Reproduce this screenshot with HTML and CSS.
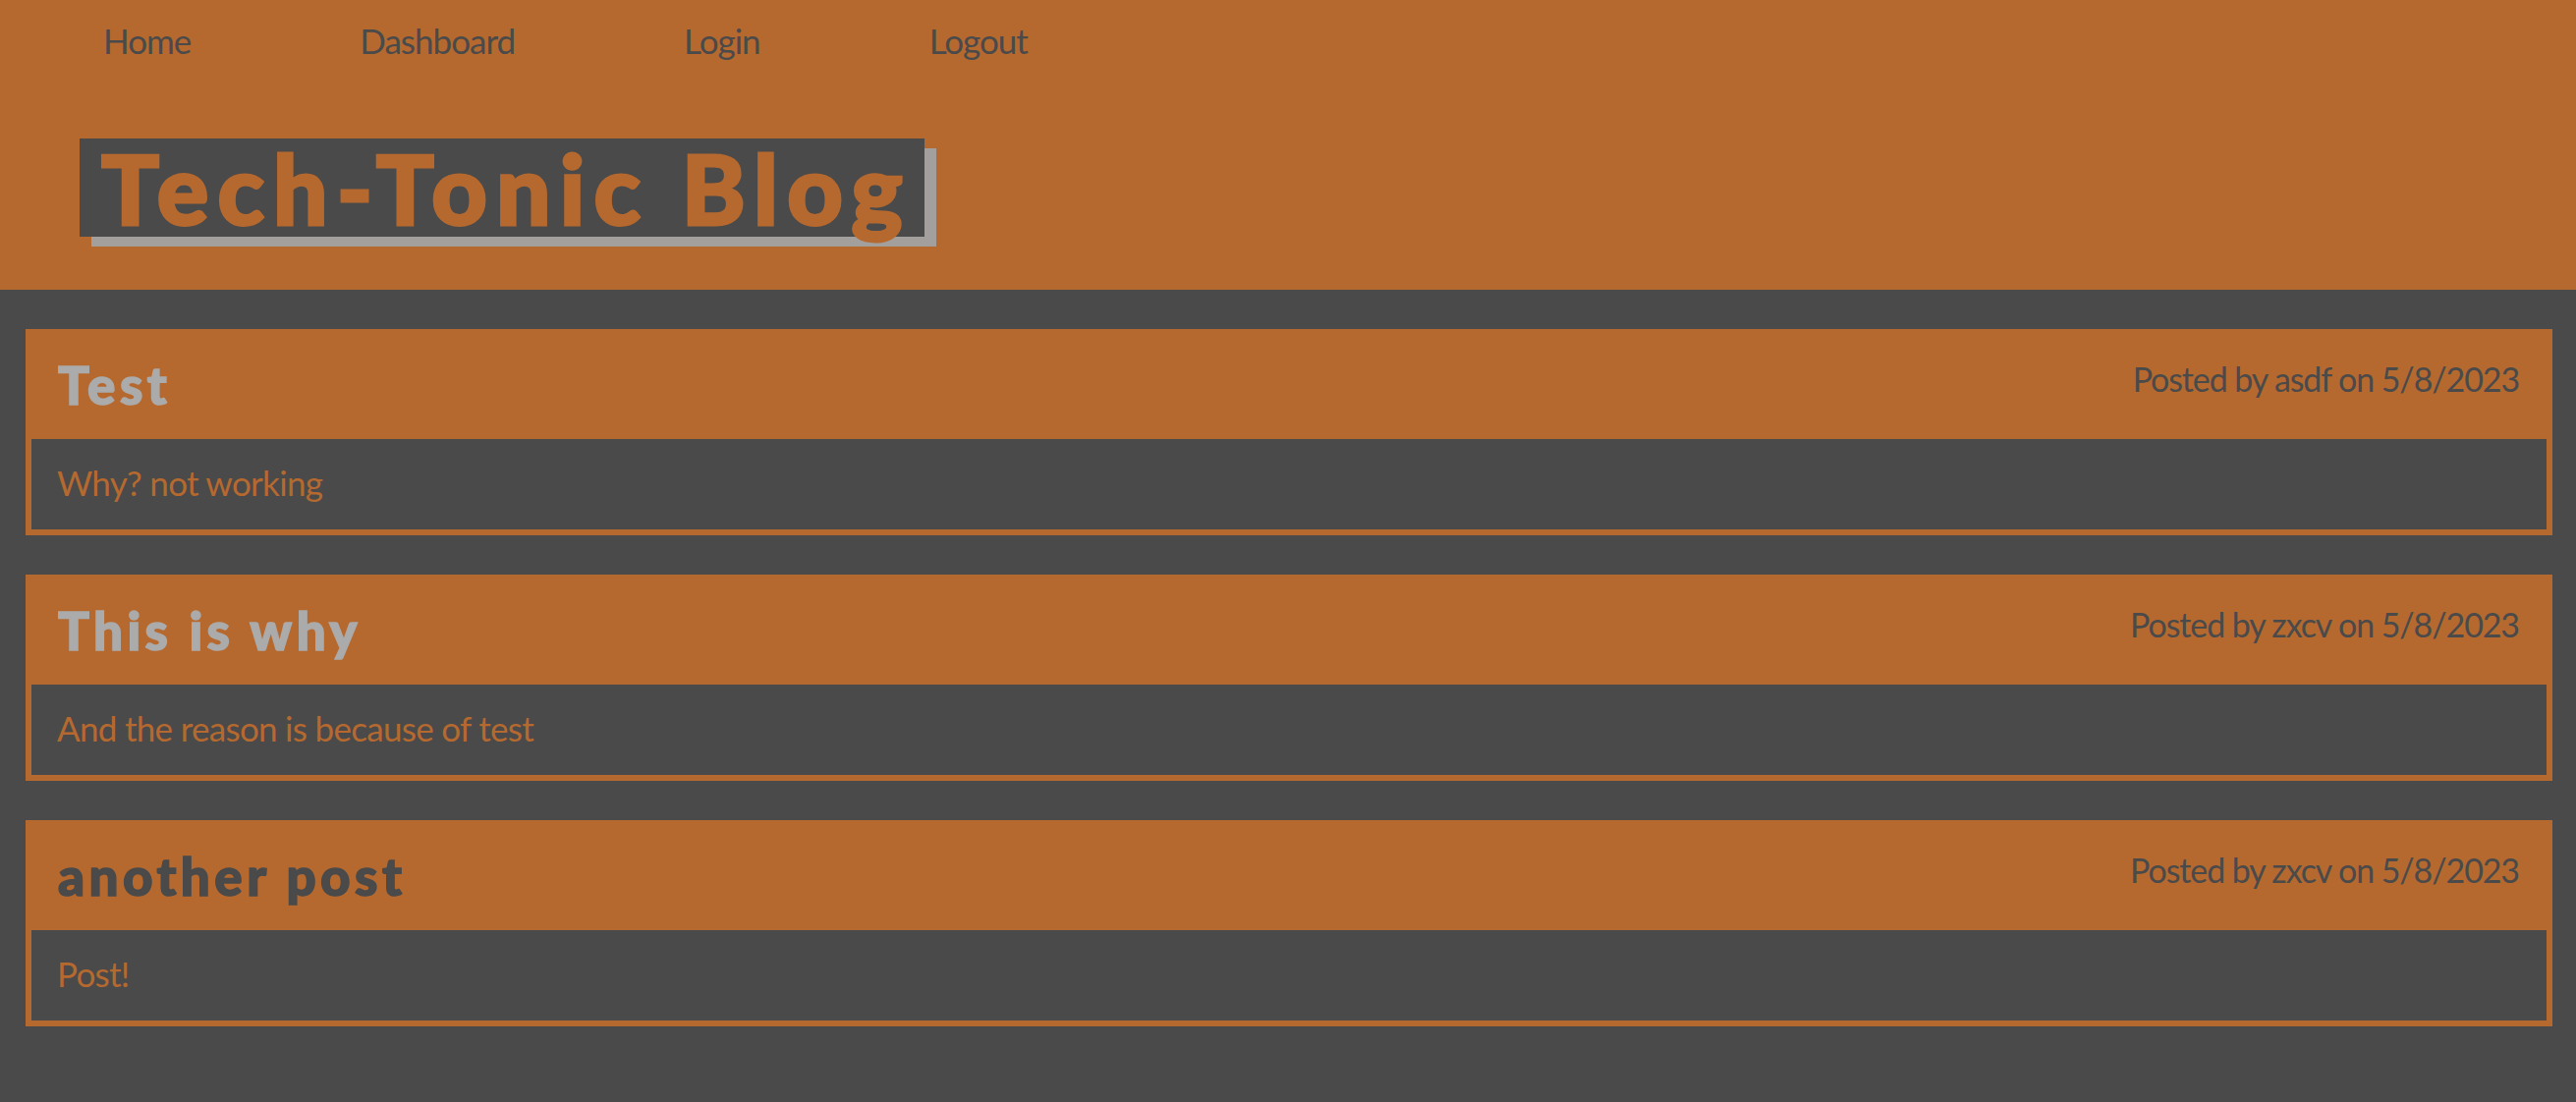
FILE: index.html
```html
<!DOCTYPE html>
<html lang="en">
<head>
<meta charset="utf-8">
<title>Tech-Tonic Blog</title>
<link rel="stylesheet" href="styles.css">
</head>
<body>
<header class="site-header">
  <nav class="nav">
    <a class="nav-link" href="#">Home</a>
    <a class="nav-link" href="#">Dashboard</a>
    <a class="nav-link" href="#">Login</a>
    <a class="nav-link" href="#">Logout</a>
  </nav>
  <div class="brand-wrap">
    <h1 class="brand">Tech-Tonic Blog</h1>
  </div>
</header>
<main class="posts">
  <article class="post">
    <div class="post-head">
      <h2 class="post-title light">Test</h2>
      <p class="post-meta">Posted by asdf on 5/8/2023</p>
    </div>
    <div class="post-body">Why? not working</div>
  </article>
  <article class="post">
    <div class="post-head">
      <h2 class="post-title light">This is why</h2>
      <p class="post-meta">Posted by zxcv on 5/8/2023</p>
    </div>
    <div class="post-body">And the reason is because of test</div>
  </article>
  <article class="post">
    <div class="post-head">
      <h2 class="post-title dark">another post</h2>
      <p class="post-meta">Posted by zxcv on 5/8/2023</p>
    </div>
    <div class="post-body">Post!</div>
  </article>
</main>
</body>
</html>
```
FILE: styles.css
```css
* { box-sizing: border-box; }

html, body {
  margin: 0;
  padding: 0;
}

body {
  background: #4a4a4a;
  font-family: Lato, "Open Sans", sans-serif;
  color: #4a4a4a;
  min-height: 1122px;
}

.site-header {
  background: #b6692f;
  height: 295px;
  padding-top: 20px;
}

.nav {
  display: flex;
  gap: 172px;
  padding-left: 105px;
}

.nav-link {
  color: #4a4a4a;
  text-decoration: none;
  font-size: 35px;
  letter-spacing: -1px;
  line-height: 42px;
}

.brand-wrap {
  padding-left: 81px;
  margin-top: 79px;
}

.brand {
  display: inline-block;
  margin: 0;
  height: 100px;
  line-height: 100px;
  padding: 0 13px 0 22px;
  background: #4a4a4a;
  color: #b6692f;
  font-size: 98px;
  font-weight: 900;
  letter-spacing: 9.2px;
  -webkit-text-stroke: 3px #b6692f;
  box-shadow: 12px 10px 0 #a29f9c;
  white-space: nowrap;
}

.posts {
  display: flex;
  flex-direction: column;
  gap: 40px;
  padding: 40px 24px 0 26px;
}

.post {
  border: 6px solid #b6692f;
  background: #b6692f;
}

.post-head {
  display: flex;
  justify-content: space-between;
  align-items: flex-start;
  height: 106px;
  padding: 20px 28px 0 27px;
}

.post-title {
  margin: 0;
  font-size: 53px;
  font-weight: 900;
  line-height: 62px;
  letter-spacing: 4.4px;
  -webkit-text-stroke: 1.5px currentColor;
}

.post-title.light { color: #ababab; }
.post-title.dark { color: #4a4a4a; }

.post-meta {
  margin: 4px 0 0;
  font-size: 34px;
  line-height: 42px;
  color: #4a4a4a;
  letter-spacing: -1.1px;
}

.post-body {
  background: #4a4a4a;
  color: #b6692f;
  font-size: 35px;
  line-height: 42px;
  padding: 23px 26px 27px;
  letter-spacing: -0.7px;
}
```
